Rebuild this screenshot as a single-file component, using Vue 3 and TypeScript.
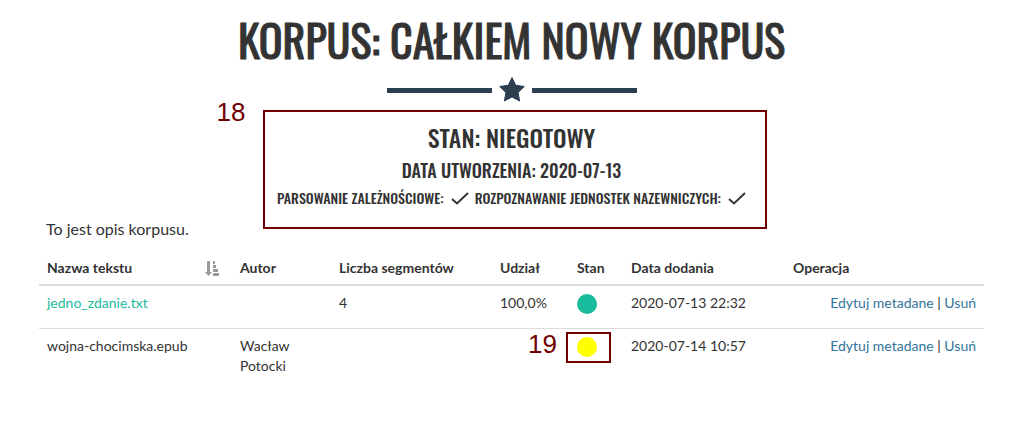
<script setup lang="ts">
interface TextRow {
  name: string
  ready: boolean
  author: string
  segments: string
  share: string
  added: string
}

const rows: TextRow[] = [
  { name: 'jedno_zdanie.txt', ready: true, author: '', segments: '4', share: '100,0%', added: '2020-07-13 22:32' },
  { name: 'wojna-chocimska.epub', ready: false, author: 'Wacław Potocki', segments: '', share: '', added: '2020-07-14 10:57' },
]

const features: string[] = ['Parsowanie zależnościowe:', 'Rozpoznawanie jednostek nazewniczych:']
</script>

<template>
  <main class="page">
    <header class="head">
      <h1>Korpus: Całkiem nowy korpus</h1>
      <div class="divider">
        <span class="bar"></span>
        <svg class="star" viewBox="0 0 26 25" aria-hidden="true">
          <path d="M13 .6 16.7 8.3 25.3 9.5 19.1 15.5 20.6 24 13 20 5.4 24 6.9 15.5 .7 9.5 9.3 8.3Z" stroke-linejoin="round" />
        </svg>
        <span class="bar"></span>
      </div>
      <section class="info">
        <h2>Stan: niegotowy</h2>
        <h3>Data utworzenia: 2020-07-13</h3>
        <h4>
          <span v-for="feature in features" :key="feature" class="feature">
            {{ feature }}
            <svg class="check" viewBox="0 0 18 13" aria-hidden="true"><path d="M1 7 6 11.5 17 1" /></svg>
          </span>
        </h4>
        <div class="mark mark-info"><span class="mark-no">18</span></div>
      </section>
    </header>

    <p class="description">To jest opis korpusu.</p>

    <table>
      <colgroup>
        <col class="c-name" /><col class="c-author" /><col class="c-segments" /><col class="c-share" />
        <col class="c-state" /><col class="c-date" /><col class="c-actions" />
      </colgroup>
      <thead>
        <tr>
          <th>
            <div class="sort">
              Nazwa tekstu
              <svg class="sort-icon" viewBox="0 0 14 15" aria-hidden="true">
                <path d="M2 0h3v11h2L3.500 15 0 11h2ZM8 0h2v3H8ZM8 4h3v3H8ZM8 8h5v3H8ZM8 12h6v3H8Z" />
              </svg>
            </div>
          </th>
          <th>Autor</th>
          <th>Liczba segmentów</th>
          <th>Udział</th>
          <th>Stan</th>
          <th>Data dodania</th>
          <th>Operacja</th>
        </tr>
      </thead>
      <tbody>
        <tr v-for="row in rows" :key="row.name">
          <td><a v-if="row.ready" href="#" class="text-link">{{ row.name }}</a><template v-else>{{ row.name }}</template></td>
          <td>{{ row.author }}</td>
          <td>{{ row.segments }}</td>
          <td>{{ row.share }}</td>
          <td>
            <div class="state">
              <span class="dot" :class="{ pending: !row.ready }"></span>
              <div v-if="!row.ready" class="mark mark-state"><span class="mark-no">19</span></div>
            </div>
          </td>
          <td>{{ row.added }}</td>
          <td class="actions"><a href="#">Edytuj metadane</a> | <a href="#">Usuń</a></td>
        </tr>
      </tbody>
    </table>
  </main>
</template>

<style>
body {
  margin: 0;
  background: #fff;
}
</style>

<style scoped>
.page {
  margin: 0 29px 0 39px;
  padding-top: 11px;
  color: #333;
  font: 14px/20px Lato, "Liberation Sans", sans-serif;
}
.head {
  text-align: center;
}
h1, h2, h3, h4 {
  margin: 0;
  font-family: Oswald, "Liberation Sans Narrow", "Liberation Sans", sans-serif;
  font-weight: 500;
  text-transform: uppercase;
  white-space: nowrap;
}
h1 {
  font-size: 44px;
  font-weight: 400;
  line-height: 58px;
  -webkit-text-stroke: 1px #333;
}
.divider {
  display: flex;
  justify-content: center;
  align-items: center;
  gap: 7px;
  height: 40px;
  padding-top: 1px;
}
.bar {
  width: 105px;
  height: 5px;
  background: #2c3e50;
}
.star {
  width: 26px;
  height: 25px;
  margin-bottom: 2px;
  fill: #2c3e50;
  stroke: #2c3e50;
}
.info {
  position: relative;
  box-sizing: border-box;
  height: 108px;
  padding-top: 9px;
}
h2 {
  font-size: 24px;
  line-height: 36px;
}
h3 {
  font-size: 18px;
  line-height: 30px;
}
h4 {
  display: flex;
  justify-content: center;
  gap: 6px;
  font-size: 14px;
  line-height: 26px;
}
.feature {
  display: flex;
  align-items: center;
  gap: 7px;
}
.check {
  width: 18px;
  height: 13px;
  fill: none;
  stroke: #333;
  stroke-width: 2;
}
.mark {
  position: absolute;
  box-sizing: border-box;
  border: 2px solid #700000;
}
.mark-info {
  top: 0;
  left: calc(50% - 249px);
  width: 504px;
  height: 119px;
}
.mark-no {
  position: absolute;
  right: 100%;
  color: #700000;
  font: 26px/30px "Liberation Sans", sans-serif;
}
.mark-info .mark-no {
  top: -15px;
  margin-right: 19px;
}
.description {
  margin: 0 7px;
  font-size: 16px;
  line-height: 22px;
}
table {
  width: 100%;
  margin-top: 11px;
  border-collapse: collapse;
  table-layout: fixed;
}
.c-name { width: 193px; }
.c-author { width: 99px; }
.c-segments { width: 161px; }
.c-share { width: 77px; }
.c-state { width: 54px; }
.c-date { width: 162px; }
th, td {
  padding: 7px 8px;
  text-align: left;
  vertical-align: top;
}
th {
  padding-bottom: 6px;
  border-bottom: 2px solid #ddd;
  font-weight: 700;
}
td {
  height: 28px;
}
tbody tr + tr td {
  border-top: 1px solid #ddd;
}
td.actions {
  text-align: right;
}
a {
  color: #337ab7;
  text-decoration: none;
}
.actions a {
  color: #31759c;
}
.text-link {
  color: #18bc9c;
}
.sort {
  display: flex;
  justify-content: space-between;
  align-items: center;
  padding-right: 5px;
}
.sort-icon {
  width: 14px;
  height: 15px;
  fill: #999;
}
.state {
  position: relative;
  padding-top: 1px;
}
.dot {
  display: block;
  width: 20px;
  height: 20px;
  border-radius: 50%;
  background: #18bc9c;
}
.dot.pending {
  background: #ff0;
}
.mark-state {
  top: -4px;
  left: -11px;
  width: 45px;
  height: 31px;
}
.mark-state .mark-no {
  top: -5px;
  margin-right: 11px;
}
</style>
